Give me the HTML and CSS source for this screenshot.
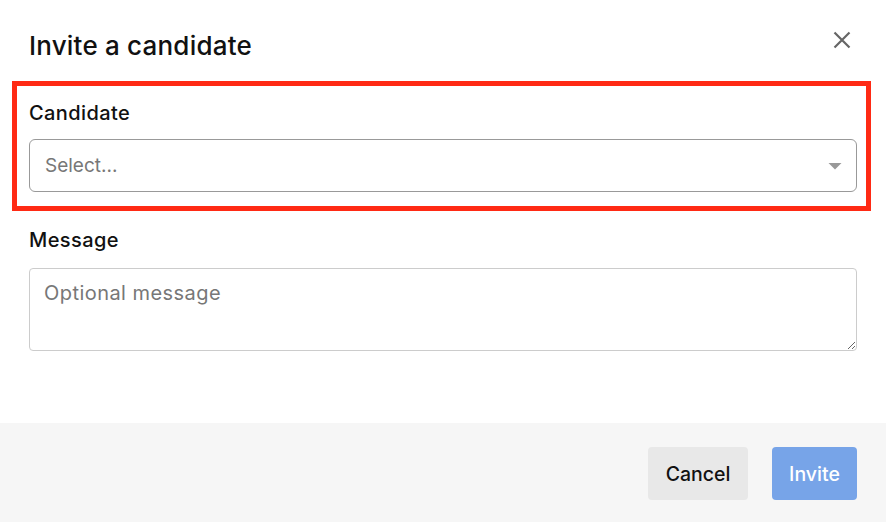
FILE: index.html
```html
<!DOCTYPE html>
<html lang="en">
<head>
<meta charset="utf-8">
<title>Invite a candidate</title>
<link rel="stylesheet" href="styles.css">
</head>
<body>
<div class="modal">
  <div class="body">
    <div class="header">
      <h1 class="title">Invite a candidate</h1>
      <button class="close" aria-label="Close">
        <svg width="18" height="18" viewBox="0 0 18 18"><path d="M1.5 1.5 L16.5 16.5 M16.5 1.5 L1.5 16.5" stroke="#666" stroke-width="2.2" fill="none"/></svg>
      </button>
    </div>
    <div class="group highlighted">
      <label class="label">Candidate</label>
      <div class="select">
        <span class="placeholder">Select...</span>
        <svg class="caret" width="14" height="7" viewBox="0 0 14 7"><path d="M0.5 0 H13.5 L7 6.5 Z" fill="#999"/></svg>
      </div>
    </div>
    <div class="group message">
      <label class="label">Message</label>
      <textarea class="textarea" placeholder="Optional message"></textarea>
    </div>
  </div>
  <div class="footer">
    <button class="btn cancel">Cancel</button>
    <button class="btn invite">Invite</button>
  </div>
</div>
</body>
</html>
```
FILE: styles.css
```css
* { box-sizing: border-box; }
html, body { margin: 0; padding: 0; }
body {
  font-family: Inter, "Noto Sans", "Liberation Sans", sans-serif;
  color: #111;
  background: #fff;
}
.modal {
  width: 886px;
  height: 522px;
  display: flex;
  flex-direction: column;
}
.body { flex: 1; }
.header {
  display: flex;
  justify-content: space-between;
  align-items: flex-start;
  padding: 31px 35px 0 29px;
  margin-bottom: 20px;
}
.title {
  margin: 0;
  font-size: 26px;
  line-height: 30px;
  font-weight: 500;
  letter-spacing: 0.2px;
}
.close {
  border: 0;
  background: none;
  padding: 0;
  width: 18px;
  height: 18px;
  cursor: pointer;
}
.close svg { display: block; }
.group { display: flex; flex-direction: column; }
.highlighted {
  margin: 0 15px 0 12px;
  border: 5px solid #ff2a14;
  padding: 15px 9px 14px 12px;
}
.label {
  font-size: 20px;
  line-height: 24px;
  font-weight: 500;
  letter-spacing: 0.4px;
  margin-bottom: 14px;
}
.select {
  height: 53px;
  border: 1px solid #999;
  border-radius: 6px;
  display: flex;
  align-items: center;
  justify-content: space-between;
  padding: 0 14px 0 15px;
}
.placeholder {
  font-size: 19px;
  color: #777;
}
.caret { display: block; margin-top: 2px; }
.message {
  padding: 17px 29px 0 29px;
}
.message .label { margin-bottom: 16px; }
.textarea {
  height: 83px;
  width: 100%;
  border: 1px solid #ccc;
  border-radius: 4px;
  padding: 12px 14px;
  font-family: inherit;
  font-size: 20px;
  line-height: 24px;
  letter-spacing: 0.45px;
  color: #111;
  resize: vertical;
  outline: none;
}
.textarea::placeholder { color: #777; }
.footer {
  height: 99px;
  background: #f6f6f6;
  display: flex;
  justify-content: flex-end;
  align-items: flex-start;
  gap: 24px;
  padding: 24px 29px 0 0;
}
.btn {
  height: 53px;
  border: 0;
  border-radius: 4px;
  font-family: inherit;
  font-size: 19.5px;
  font-weight: 500;
  cursor: pointer;
}
.cancel {
  width: 100px;
  background: #e8e8e8;
  color: #111;
}
.invite {
  width: 85px;
  background: #77a4e8;
  color: #fff;
}
```
